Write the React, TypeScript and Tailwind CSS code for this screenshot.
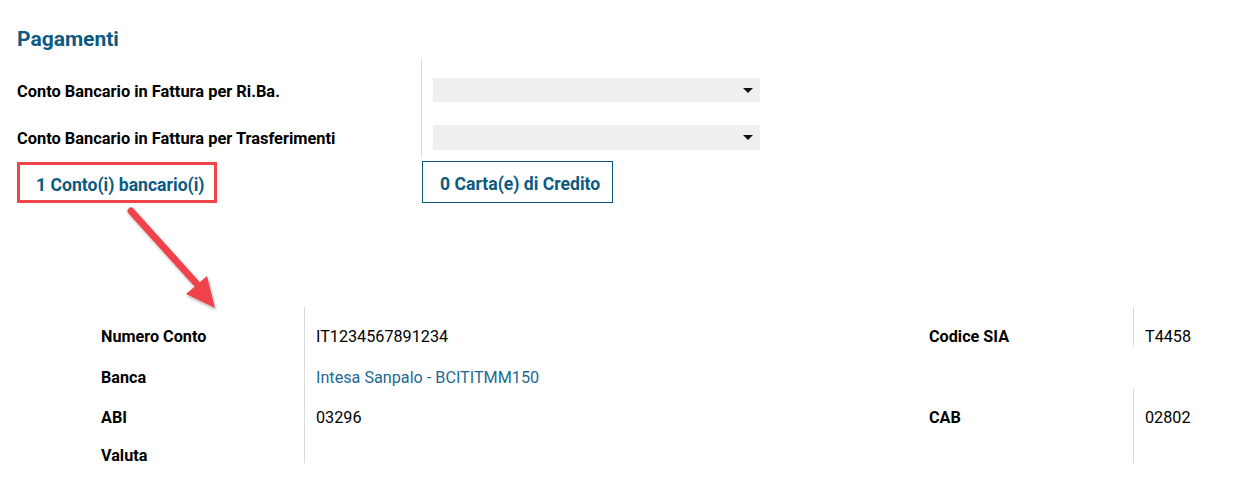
import React from "react";

const Caret = () => (
  <svg width="10" height="6" viewBox="0 0 10 6" className="absolute right-[7px] top-[10px]">
    <path d="M0 0 L10 0 L5 5 Z" fill="#111" />
  </svg>
);

export default function App() {
  return (
    <div className="relative w-[1241px] h-[493px] bg-white text-black overflow-hidden" style={{ fontFamily: "Roboto, 'Liberation Sans', sans-serif" }}>
      <div className="pl-[17px] pt-[27px]">
        <h2 className="text-[21px] font-bold text-[#0b5a82] leading-[24px]">Pagamenti</h2>
        <div className="flex mt-[7px]">
          <div className="w-[404px] flex flex-col">
            <div className="h-[20px]" />
            <div className="h-[47px] pt-[4px] text-[16.4px] font-bold leading-[20px] whitespace-nowrap">Conto Bancario in Fattura per Ri.Ba.</div>
            <div className="h-[34px] pt-[4px] text-[16.4px] font-bold leading-[20px] whitespace-nowrap">Conto Bancario in Fattura per Trasferimenti</div>
          </div>
          <div className="border-l border-[#d9d9d9] pl-[11px] h-[100px]">
            <div className="h-[20px]" />
            <div className="relative w-[327px] h-[24px] bg-[#efefef]"><Caret /></div>
            <div className="h-[23px]" />
            <div className="relative w-[327px] h-[25px] bg-[#efefef]"><Caret /></div>
          </div>
        </div>
        <div className="flex mt-[3px]">
          <div className="w-[405px]">
            <div className="w-[200px] h-[41px] border-[3px] border-[#f0434a] flex items-center pl-[16px] pt-[5px] text-[17.6px] font-bold text-[#0b5a82] whitespace-nowrap">1 Conto(i) bancario(i)</div>
          </div>
          <div className="w-[191px] h-[42px] border border-[#0b5a82] flex items-center pl-[17px] pt-[5px] text-[17.6px] font-bold text-[#0b5a82] -mt-[1px] whitespace-nowrap">0 Carta(e) di Credito</div>
        </div>
      </div>

      <div className="mt-[104px] ml-[89px] grid grid-cols-[215px_613px_216px_108px] text-[16.2px] leading-[20px]">
        <div className="flex flex-col font-bold pl-[12px]">
          <div className="h-[61px] pt-[20px]">Numero Conto</div>
          <div className="h-[40px]">Banca</div>
          <div className="h-[38px]">ABI</div>
          <div className="h-[18px]">Valuta</div>
        </div>
        <div className="border-l border-[#d9d9d9] flex flex-col h-[156px] pl-[11px]">
          <div className="h-[61px] pt-[20px]">IT1234567891234</div>
          <div className="h-[40px] text-[#1b6a94]">Intesa Sanpalo - BCITITMM150</div>
          <div className="h-[38px]">03296</div>
        </div>
        <div className="flex flex-col font-bold pl-[12px]">
          <div className="h-[61px] pt-[20px]">Codice SIA</div>
          <div className="h-[40px]" />
          <div className="h-[38px]">CAB</div>
        </div>
        <div className="flex flex-col">
          <div className="h-[39px] border-l border-[#d9d9d9] pl-[11px] pt-[20px]">T4458</div>
          <div className="h-[42px]" />
          <div className="h-[75px] border-l border-[#d9d9d9] pl-[11px] pt-[20px]">02802</div>
        </div>
      </div>

      <svg className="absolute left-0 top-0 pointer-events-none" width="1241" height="493">
        <defs>
          <filter id="sh" x="-20%" y="-20%" width="140%" height="140%">
            <feDropShadow dx="1" dy="2" stdDeviation="1.5" floodColor="#000" floodOpacity="0.3" />
          </filter>
        </defs>
        <g filter="url(#sh)">
          <line x1="131" y1="211" x2="196" y2="283" stroke="#f0434a" strokeWidth="7" strokeLinecap="round" />
          <polygon points="215,308 186,294 207,276" fill="#f0434a" />
        </g>
      </svg>
    </div>
  );
}
